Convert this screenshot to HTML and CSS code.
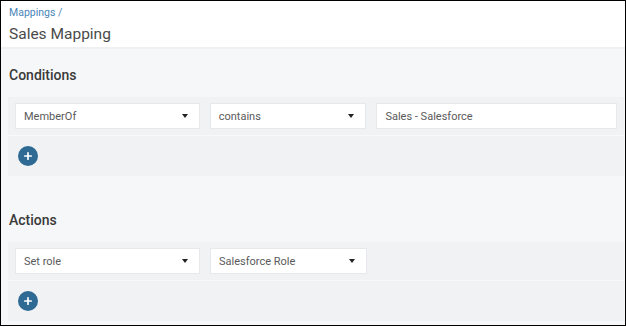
FILE: index.html
```html
<!DOCTYPE html>
<html lang="en">
<head>
    <meta charset="UTF-8">
    <title>Sales Mapping</title>
    <link rel="stylesheet" href="styles.css">
</head>
<body>
    <div class="frame">
        <div class="header">
            <a class="crumb" href="#">Mappings /</a>
            <h1>Sales Mapping</h1>
        </div>
        <div class="content">
            <div class="section">
                <h2>Conditions</h2>
                <div class="panel">
                    <div class="row">
                        <div class="select wide"><span>MemberOf</span><i class="caret"></i></div>
                        <div class="select mid"><span>contains</span><i class="caret"></i></div>
                        <div class="field"><span>Sales - Salesforce</span></div>
                    </div>
                    <div class="addRow">
                        <button class="addBtn" type="button">
                            <svg width="10" height="10" viewBox="0 0 10 10"><path d="M5 1.8v6.4M1.8 5h6.4" stroke="#fff" stroke-width="1.7" stroke-linecap="round"/></svg>
                        </button>
                    </div>
                </div>
            </div>
            <div class="section">
                <h2>Actions</h2>
                <div class="panel">
                    <div class="row">
                        <div class="select wide"><span>Set role</span><i class="caret"></i></div>
                        <div class="select mid"><span>Salesforce Role</span><i class="caret"></i></div>
                    </div>
                    <div class="addRow">
                        <button class="addBtn" type="button">
                            <svg width="10" height="10" viewBox="0 0 10 10"><path d="M5 1.8v6.4M1.8 5h6.4" stroke="#fff" stroke-width="1.7" stroke-linecap="round"/></svg>
                        </button>
                    </div>
                </div>
            </div>
        </div>
    </div>
</body>
</html>
```

FILE: styles.css
```css
* {
    margin: 0;
    padding: 0;
    box-sizing: border-box;
}

body {
    font-family: Roboto, "Liberation Sans", sans-serif;
    background: #fff;
    color: #555;
}

.frame {
    width: 626px;
    height: 326px;
    border: 1px solid #000;
    overflow: hidden;
    background: #f6f7f9;
}

.header {
    background: #fff;
    height: 48px;
    padding: 5px 8px 0;
    border-bottom: 2px solid #eef0f2;
}

.crumb {
    display: block;
    font-size: 10.5px;
    line-height: 14px;
    color: #4a86b8;
    text-decoration: none;
}

h1 {
    font-size: 15.5px;
    font-weight: 400;
    color: #4a4a4a;
    line-height: 22px;
    margin-top: 3px;
}

.content {
    padding: 0 1px 0 7px;
}

.section + .section {
    margin-top: 18px;
}

h2 {
    font-size: 14px;
    font-weight: 500;
    color: #3a3a3a;
    line-height: 18px;
    padding: 17px 0 0 1px;
    margin-bottom: 13px;
}

.panel {
    background: #f1f2f4;
}

.row {
    display: flex;
    gap: 10px;
    padding: 6px 7px;
    border-bottom: 1px solid #f8f9fa;
}

.select, .field {
    height: 26px;
    background: #fff;
    border: 1px solid #e6e8eb;
    display: flex;
    align-items: center;
    justify-content: space-between;
    padding: 0 8px;
    font-size: 11px;
    color: #5a5a5a;
}

.wide {
    width: 185px;
}

.mid {
    width: 157px;
}

.field {
    width: 241px;
}

.caret {
    width: 0;
    height: 0;
    border-left: 3.5px solid transparent;
    border-right: 3.5px solid transparent;
    border-top: 4px solid #222;
    margin-right: 3px;
}

.addRow {
    height: 40px;
    padding: 10px 9px 10px 10px;
}

.addBtn {
    width: 20px;
    height: 20px;
    border-radius: 50%;
    border: none;
    background: #2e6a94;
    display: flex;
    align-items: center;
    justify-content: center;
    cursor: pointer;
}
```
